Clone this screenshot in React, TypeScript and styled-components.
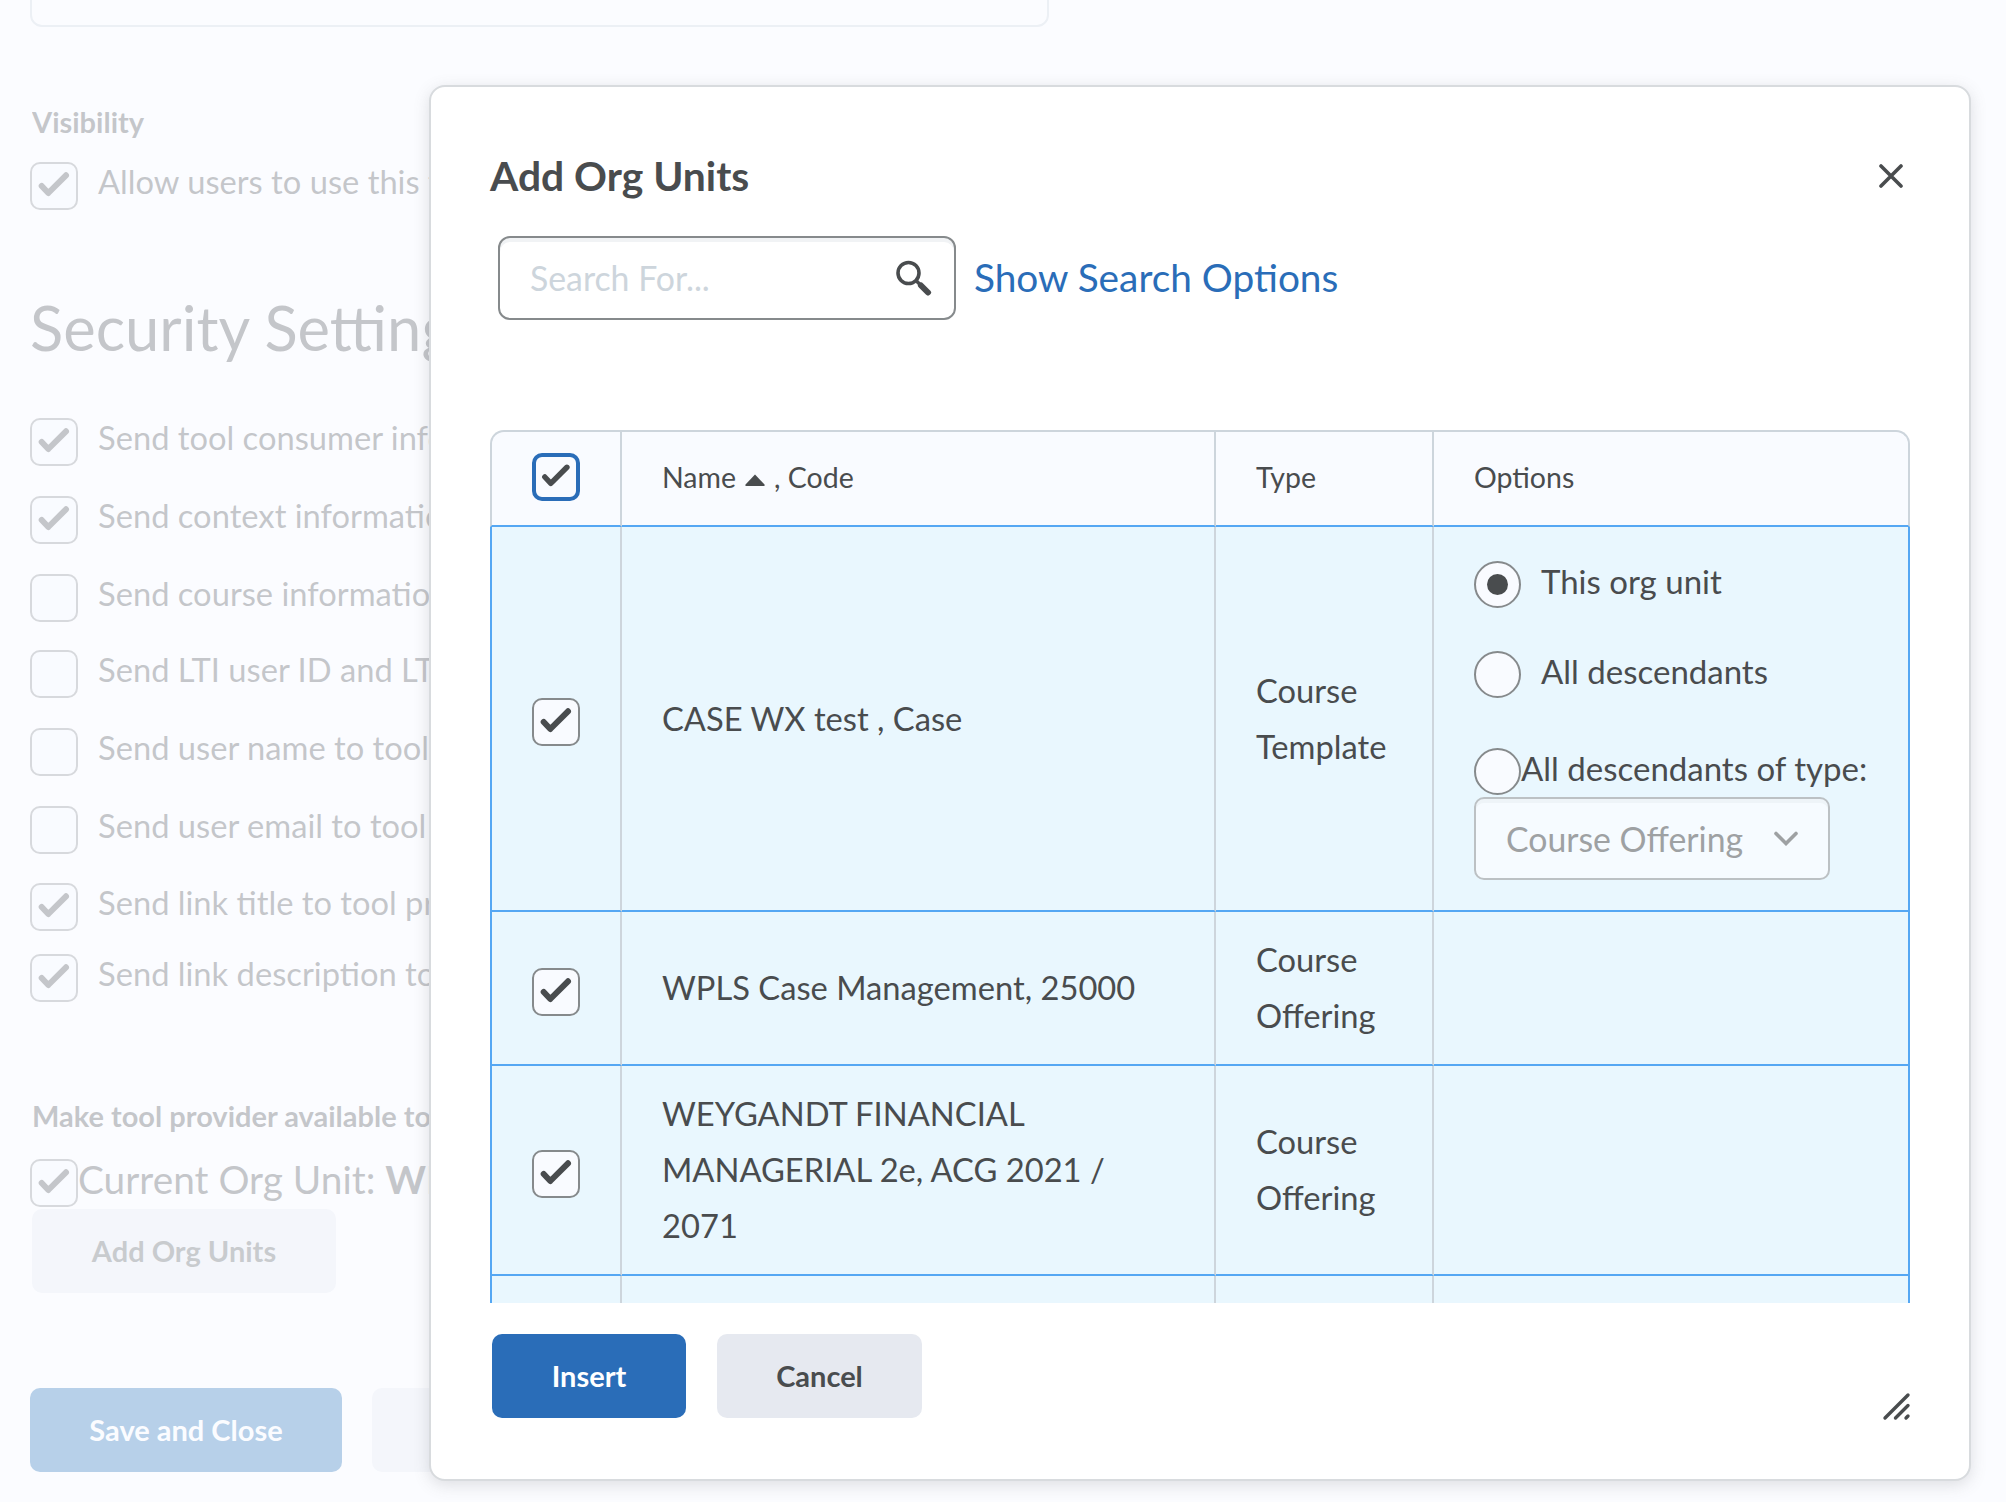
import React from "react";
import styled, { createGlobalStyle } from "styled-components";

const GlobalStyle = createGlobalStyle`
  html, body {
    margin: 0;
    padding: 0;
    background: #ffffff;
  }
  body {
    font-family: "Lato", "Noto Sans", sans-serif;
    color: #494c4e;
  }
  * {
    box-sizing: border-box;
  }
`;

const Viewport = styled.div`
  position: relative;
  width: 2006px;
  height: 1502px;
  overflow: hidden;
`;

/* page behind the dialog */
const Page = styled.div`
  display: flex;
  flex-direction: column;
  align-items: flex-start;
  padding-left: 30px;
  height: 100%;
`;

const TopBox = styled.div`
  width: 1019px;
  height: 47px;
  margin-top: -20px;
  border: 2px solid #cdd5dc;
  border-radius: 12px;
`;

const FieldLabel = styled.div<{ $mt: number }>`
  width: 398px;
  overflow: hidden;
  margin-top: ${(p) => p.$mt}px;
  margin-left: 2px;
  font-size: 29px;
  line-height: 34px;
  font-weight: 700;
  white-space: nowrap;
`;

const CheckRow = styled.div<{ $mt: number }>`
  display: flex;
  align-items: flex-start;
  gap: 20px;
  width: 400px;
  overflow: hidden;
  margin-top: ${(p) => p.$mt}px;
  font-size: 32.7px;
  line-height: 40px;
  white-space: nowrap;
`;

const Heading = styled.h2`
  width: 400px;
  overflow: hidden;
  margin: 81px 0 0;
  font-size: 61.5px;
  line-height: 72px;
  font-weight: 400;
  white-space: nowrap;
`;

const CurrentOrg = styled.div`
  display: flex;
  align-items: flex-start;
  width: 400px;
  overflow: hidden;
  margin-top: 26px;
  font-size: 38.8px;
  line-height: 40px;
  white-space: nowrap;

  b {
    font-weight: 700;
  }
`;

const PageButton = styled.div<{ $primary?: boolean; $w: number; $ml?: number; $mt?: number }>`
  display: flex;
  align-items: center;
  justify-content: center;
  width: ${(p) => p.$w}px;
  height: 84px;
  margin-top: ${(p) => p.$mt ?? 0}px;
  margin-left: ${(p) => p.$ml ?? 0}px;
  padding-bottom: 2px;
  border-radius: 10px;
  background: ${(p) => (p.$primary ? "#1c6bb4" : "#e6eaf0")};
  color: ${(p) => (p.$primary ? "#ffffff" : "#565a5c")};
  font-size: 29px;
  font-weight: 700;
`;

const PageActions = styled.div`
  display: flex;
  gap: 30px;
  margin-top: 95px;
`;

const Backdrop = styled.div`
  position: absolute;
  inset: 0;
  background: rgba(249, 251, 255, 0.7);
`;

/* dialog */
const Dialog = styled.div`
  position: absolute;
  left: 429px;
  top: 85px;
  width: 1542px;
  height: 1396px;
  display: flex;
  flex-direction: column;
  background: #ffffff;
  border: 2px solid #d8dbde;
  border-radius: 16px;
  box-shadow: 0 4px 16px rgba(86, 90, 92, 0.18);
`;

const DialogHeader = styled.div`
  display: flex;
  align-items: center;
  justify-content: space-between;
  height: 46px;
  margin: 66px 66px 0 59px;
`;

const Title = styled.h1`
  margin: 0;
  font-size: 40.8px;
  line-height: 46px;
  font-weight: 700;
  color: #494c4e;
`;

const SearchRow = styled.div`
  display: flex;
  align-items: center;
  gap: 18px;
  margin: 37px 0 0 67px;
`;

const SearchBox = styled.div`
  display: flex;
  align-items: center;
  justify-content: space-between;
  width: 458px;
  height: 84px;
  padding: 0 22px 0 30px;
  border: 2px solid #868a8c;
  border-radius: 12px;
  box-shadow: inset 0 4px 0 0 #f1f3f5;
`;

const Placeholder = styled.span`
  font-size: 33.8px;
  color: #cdd5dc;
`;

const SearchLink = styled.a`
  margin-bottom: 2px;
  font-size: 38.8px;
  color: #2a6db8;
  white-space: nowrap;
`;

const TableClip = styled.div`
  height: 873px;
  margin: 110px 0 0 59px;
  overflow: hidden;
  flex: none;
`;

const Table = styled.table`
  width: 1420px;
  table-layout: fixed;
  border-collapse: separate;
  border-spacing: 0;
  font-size: 32.7px;
  line-height: 56px;
`;

const HeadCell = styled.th<{ $w: number; $pad?: boolean }>`
  width: ${(p) => p.$w}px;
  height: 97px;
  padding: 0 0 3px ${(p) => (p.$pad === false ? 0 : 40)}px;
  background: #f9fbff;
  border-top: 2px solid #cdd5dc;
  border-right: 2px solid #cdd5dc;
  border-bottom: 2px solid #55a7f3;
  font-size: 28.5px;
  font-weight: 400;
  text-align: left;
  white-space: nowrap;

  &:first-child {
    border-left: 2px solid #cdd5dc;
    border-top-left-radius: 14px;
  }
  &:last-child {
    border-top-right-radius: 14px;
  }
`;

const HeadCheck = styled.div`
  display: flex;
  align-items: center;
  justify-content: center;
`;

const Cell = styled.td<{ $h: number; $center?: boolean }>`
  height: ${(p) => p.$h}px;
  padding: 0 ${(p) => (p.$center ? 0 : 40)}px;
  background: #e9f7fe;
  border-right: 2px solid #cdd5dc;
  border-bottom: 2px solid #55a7f3;
  vertical-align: middle;

  &:first-child {
    border-left: 2px solid #55a7f3;
    text-align: center;
  }
  &:last-child {
    border-right: 2px solid #55a7f3;
  }
`;

const SortMark = styled.svg`
  display: inline-block;
  width: 22px;
  height: 14px;
  margin: 0 8px 0 8px;
  vertical-align: 1px;
`;

const BoxWrap = styled.span<{ $focus?: boolean }>`
  display: inline-flex;
  flex: none;
  width: 48px;
  height: 48px;
  background: #f9fbff;
  border: ${(p) => (p.$focus ? "4px solid #2a6db8" : "2px solid #868a8c")};
  border-radius: 10px;
  vertical-align: middle;

  svg {
    width: 100%;
    height: 100%;
  }
`;

const OptionList = styled.div`
  display: flex;
  flex-direction: column;
  padding: 34px 0 30px;
  font-size: 33px;
`;

const RadioRow = styled.label<{ $mt?: number; $gap?: number }>`
  display: flex;
  align-items: flex-start;
  gap: ${(p) => p.$gap ?? 20}px;
  margin-top: ${(p) => p.$mt ?? 0}px;
  line-height: 41px;
  white-space: nowrap;
`;

const Radio = styled.span<{ $on?: boolean }>`
  display: flex;
  align-items: center;
  justify-content: center;
  flex: none;
  width: 47px;
  height: 47px;
  background: #f9fbff;
  border: 2px solid #868a8c;
  border-radius: 50%;

  &::after {
    content: "";
    display: ${(p) => (p.$on ? "block" : "none")};
    width: 21px;
    height: 21px;
    border-radius: 50%;
    background: #494c4e;
  }
`;

const SelectBox = styled.div`
  display: flex;
  align-items: center;
  justify-content: space-between;
  width: 356px;
  height: 83px;
  margin-top: 2px;
  padding: 0 30px 0 30px;
  color: #9ea1a3;
  font-size: 33.8px;
  background: #f6fbff;
  border: 2px solid #bcc1c4;
  border-radius: 10px;
  box-shadow: inset 0 4px 0 0 #eef4f8;
  line-height: 40px;
  white-space: nowrap;
`;

const DialogFooter = styled.div`
  display: flex;
  gap: 31px;
  margin: 31px 0 0 61px;
`;

const Button = styled.button<{ $primary?: boolean }>`
  width: ${(p) => (p.$primary ? 194 : 205)}px;
  height: 84px;
  padding: 0 0 2px;
  border: 0;
  border-radius: 10px;
  background: ${(p) => (p.$primary ? "#2a6db8" : "#e6e9f0")};
  color: ${(p) => (p.$primary ? "#ffffff" : "#494c4e")};
  font-family: inherit;
  font-size: 29px;
  font-weight: 700;
`;

const ResizeHandle = styled.svg`
  position: absolute;
  right: 58px;
  bottom: 58px;
  width: 30px;
  height: 30px;
`;

const Tick = () => (
  <svg viewBox="2 2 44 44" fill="none">
    <path
      d="M11.7 24 18.3 31 36 13.3"
      stroke="#494c4e"
      strokeWidth="6"
      strokeLinecap="round"
      strokeLinejoin="round"
    />
  </svg>
);

const Check = ({ on, focus }: { on?: boolean; focus?: boolean }) => (
  <BoxWrap $focus={focus}>{on && <Tick />}</BoxWrap>
);

const settings: { label: string; on: boolean; mt: number }[] = [
  { label: "Send tool consumer information to tool provider", on: true, mt: 55 },
  { label: "Send context information to tool provider", on: true, mt: 30 },
  { label: "Send course information to tool provider", on: false, mt: 30 },
  { label: "Send LTI user ID and LTI role list to tool provider", on: false, mt: 28 },
  { label: "Send user name to tool provider", on: false, mt: 30 },
  { label: "Send user email to tool provider", on: false, mt: 30 },
  { label: "Send link title to tool provider", on: true, mt: 29 },
  { label: "Send link description to tool provider", on: true, mt: 23 },
];

const App = () => (
  <Viewport>
    <GlobalStyle />
    <Page>
      <TopBox />
      <FieldLabel $mt={78}>Visibility</FieldLabel>
      <CheckRow $mt={23}>
        <Check on />
        <span>Allow users to use this tool provider</span>
      </CheckRow>
      <Heading>Security Settings</Heading>
      {settings.map((s) => (
        <CheckRow key={s.label} $mt={s.mt}>
          <Check on={s.on} />
          <span>{s.label}</span>
        </CheckRow>
      ))}
      <FieldLabel $mt={97}>Make tool provider available to</FieldLabel>
      <CurrentOrg>
        <Check on />
        <span>
          Current Org Unit: <b>WPLS</b>
        </span>
      </CurrentOrg>
      <PageButton $w={304} $ml={2} $mt={2}>
        Add Org Units
      </PageButton>
      <PageActions>
        <PageButton $primary $w={312}>
          Save and Close
        </PageButton>
        <PageButton $w={200}>Save</PageButton>
      </PageActions>
    </Page>
    <Backdrop />
    <Dialog>
      <DialogHeader>
        <Title>Add Org Units</Title>
        <svg width="24" height="24" viewBox="0 0 24 24" fill="none">
          <path d="M2 2 22 22M22 2 2 22" stroke="#494c4e" strokeWidth="3.6" strokeLinecap="round" />
        </svg>
      </DialogHeader>
      <SearchRow>
        <SearchBox>
          <Placeholder>Search For...</Placeholder>
          <svg width="36" height="36" viewBox="0 0 36 36" fill="none">
            <circle cx="12.5" cy="13" r="10.5" stroke="#494c4e" strokeWidth="3.6" />
            <path d="M20.5 21 25 25.5" stroke="#494c4e" strokeWidth="3.6" />
            <path d="M25 25.5 32 32.5" stroke="#494c4e" strokeWidth="6" strokeLinecap="round" />
          </svg>
        </SearchBox>
        <SearchLink>Show Search Options</SearchLink>
      </SearchRow>
      <TableClip>
        <Table>
          <thead>
            <tr>
              <HeadCell $w={132} $pad={false}>
                <HeadCheck>
                  <Check on focus />
                </HeadCheck>
              </HeadCell>
              <HeadCell $w={594}>
                Name
                <SortMark viewBox="0 0 22 14">
                  <path d="M11 1.5 20.5 11.5Q21 13 19.5 13H2.5Q1 13 1.5 11.5Z" fill="#494c4e" />
                </SortMark>
                , Code
              </HeadCell>
              <HeadCell $w={218}>Type</HeadCell>
              <HeadCell $w={476}>Options</HeadCell>
            </tr>
          </thead>
          <tbody>
            <tr>
              <Cell $h={384} $center>
                <Check on />
              </Cell>
              <Cell $h={384}>CASE WX test , Case</Cell>
              <Cell $h={384}>
                Course
                <br />
                Template
              </Cell>
              <Cell $h={384}>
                <OptionList>
                  <RadioRow>
                    <Radio $on />
                    This org unit
                  </RadioRow>
                  <RadioRow $mt={43}>
                    <Radio />
                    All descendants
                  </RadioRow>
                  <RadioRow $mt={50} $gap={0}>
                    <Radio />
                    All descendants of type:
                  </RadioRow>
                  <SelectBox>
                    Course Offering
                    <svg width="24" height="15" viewBox="0 0 24 15" fill="none">
                      <path d="M2 2.5 12 12.5 22 2.5" stroke="#9ea1a3" strokeWidth="3.6" strokeLinecap="round" />
                    </svg>
                  </SelectBox>
                </OptionList>
              </Cell>
            </tr>
            <tr>
              <Cell $h={154} $center>
                <Check on />
              </Cell>
              <Cell $h={154}>WPLS Case Management, 25000</Cell>
              <Cell $h={154}>
                Course
                <br />
                Offering
              </Cell>
              <Cell $h={154} />
            </tr>
            <tr>
              <Cell $h={210} $center>
                <Check on />
              </Cell>
              <Cell $h={210}>WEYGANDT FINANCIAL MANAGERIAL 2e, ACG 2021 / 2071</Cell>
              <Cell $h={210}>
                Course
                <br />
                Offering
              </Cell>
              <Cell $h={210} />
            </tr>
            <tr>
              <Cell $h={150} $center />
              <Cell $h={150} />
              <Cell $h={150} />
              <Cell $h={150} />
            </tr>
          </tbody>
        </Table>
      </TableClip>
      <DialogFooter>
        <Button $primary>Insert</Button>
        <Button>Cancel</Button>
      </DialogFooter>
      <ResizeHandle viewBox="0 0 30 30" fill="none">
        <path
          d="M4 27 27 4M14.5 27 27 14.5M25 27 27 25"
          stroke="#494c4e"
          strokeWidth="3.4"
          strokeLinecap="round"
        />
      </ResizeHandle>
    </Dialog>
  </Viewport>
);

export default App;
